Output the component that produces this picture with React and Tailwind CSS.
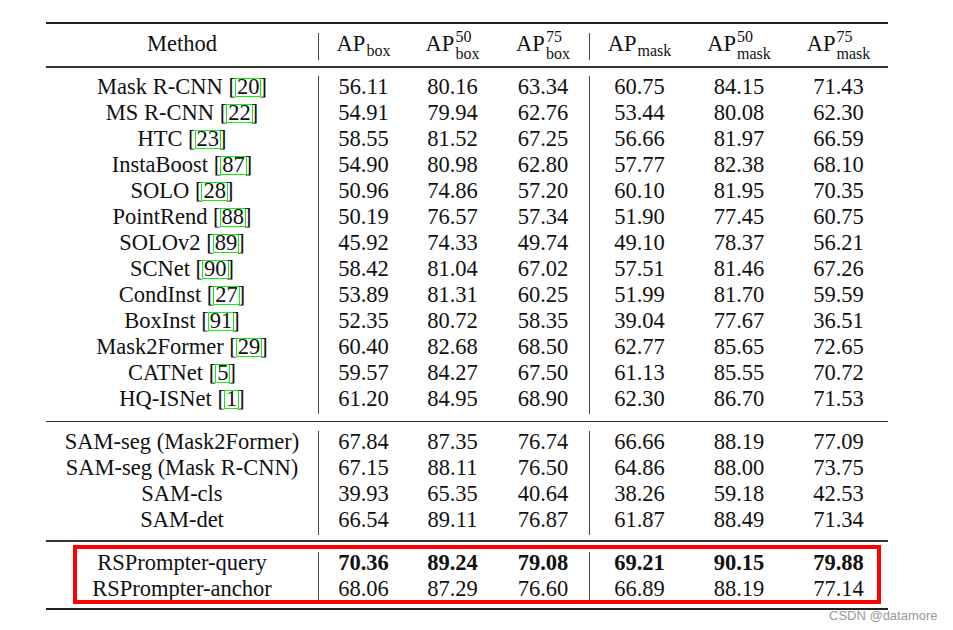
import React from 'react';

const grid = 'grid grid-cols-[272px_90px_89px_92px_100px_100px_99px]';

const baseline = [
    ['Mask R-CNN', '20', ['56.11', '80.16', '63.34', '60.75', '84.15', '71.43']],
    ['MS R-CNN', '22', ['54.91', '79.94', '62.76', '53.44', '80.08', '62.30']],
    ['HTC', '23', ['58.55', '81.52', '67.25', '56.66', '81.97', '66.59']],
    ['InstaBoost', '87', ['54.90', '80.98', '62.80', '57.77', '82.38', '68.10']],
    ['SOLO', '28', ['50.96', '74.86', '57.20', '60.10', '81.95', '70.35']],
    ['PointRend', '88', ['50.19', '76.57', '57.34', '51.90', '77.45', '60.75']],
    ['SOLOv2', '89', ['45.92', '74.33', '49.74', '49.10', '78.37', '56.21']],
    ['SCNet', '90', ['58.42', '81.04', '67.02', '57.51', '81.46', '67.26']],
    ['CondInst', '27', ['53.89', '81.31', '60.25', '51.99', '81.70', '59.59']],
    ['BoxInst', '91', ['52.35', '80.72', '58.35', '39.04', '77.67', '36.51']],
    ['Mask2Former', '29', ['60.40', '82.68', '68.50', '62.77', '85.65', '72.65']],
    ['CATNet', '5', ['59.57', '84.27', '67.50', '61.13', '85.55', '70.72']],
    ['HQ-ISNet', '1', ['61.20', '84.95', '68.90', '62.30', '86.70', '71.53']],
];

const samRows = [
    ['SAM-seg (Mask2Former)', ['67.84', '87.35', '76.74', '66.66', '88.19', '77.09']],
    ['SAM-seg (Mask R-CNN)', ['67.15', '88.11', '76.50', '64.86', '88.00', '73.75']],
    ['SAM-cls', ['39.93', '65.35', '40.64', '38.26', '59.18', '42.53']],
    ['SAM-det', ['66.54', '89.11', '76.87', '61.87', '88.49', '71.34']],
];

const ours = [
    ['RSPrompter-query', ['70.36', '89.24', '79.08', '69.21', '90.15', '79.88'], true],
    ['RSPrompter-anchor', ['68.06', '87.29', '76.60', '66.89', '88.19', '77.14'], false],
];

// value columns 0 and 3 carry the vertical rule on their left
const ruled = (i) => (i === 0 || i === 3 ? ' border-l border-[#4a4a4a]' : '');

const Row = ({ label, values, bold }) => (
    <div className={`${grid} grid-rows-[26px] h-[26px] leading-[21px]`}>
        <div className="text-center whitespace-pre">{label}</div>
        {values.map((v, i) => (
            <div key={i} className={'text-center' + ruled(i) + (bold ? ' font-bold' : '')}>
                {v}
            </div>
        ))}
    </div>
);

const Cite = ({ n }) => (
    <span>
        {' '}[<span className="inline-block border border-[#11ee11] leading-[16px] h-[19px] -ml-[1px] -mr-[2px] px-[1px] align-baseline">{n}</span>]
    </span>
);

const Head = ({ sub, sup }) => (
    <span className="whitespace-nowrap">
        AP
        {sup ? (
            <span className="relative -top-[9px] inline-flex flex-col h-[17px] ml-[1px] text-[16px] leading-[17px] text-left">
                <span>{sup}</span>
                <span>{sub}</span>
            </span>
        ) : (
            <span className="relative top-[5px] ml-[1px] text-[16px] leading-none">{sub}</span>
        )}
    </span>
);

const heads = [['box'], ['box', '50'], ['box', '75'], ['mask'], ['mask', '50'], ['mask', '75']];

const App = () => {
    return (
        <div className="relative w-[953px] h-[630px] bg-white text-[#111] text-[22.5px] font-['Liberation_Serif',serif]">
            <div className="pt-[22px] pl-[46px]">
                <div className="w-[842px]">
                    <div className="h-[2px] bg-[#222]" />

                    <div className="pt-[9px] pb-[6px]">
                        <div className={`${grid} h-[27px] leading-[22px]`}>
                            <div className="flex items-center justify-center pb-[5px]">Method</div>
                            {heads.map(([sub, sup], i) => (
                                <div key={i} className={'flex items-center justify-center pb-[5px]' + ruled(i)}>
                                    <Head sub={sub} sup={sup} />
                                </div>
                            ))}
                        </div>
                    </div>
                    <div className="h-[1.5px] bg-[#333]" />

                    <div className="pt-[8px] pb-[7px]">
                        {baseline.map(([name, ref, vals]) => (
                            <Row key={name} label={<>{name}<Cite n={ref} /></>} values={vals} />
                        ))}
                    </div>
                    <div className="h-[1.5px] bg-[#333]" />

                    <div className="pt-[9px] pb-[5px]">
                        {samRows.map(([name, vals]) => (
                            <Row key={name} label={name} values={vals} />
                        ))}
                    </div>
                    <div className="h-[1.5px] bg-[#333]" />

                    <div className="relative pt-[10px] pb-[4px]">
                        {ours.map(([name, vals, bold]) => (
                            <Row key={name} label={name} values={vals} bold={bold} />
                        ))}
                        <div className="absolute left-[27px] top-[3px] w-[808px] h-[59px] border-[4px] border-[#ff0000]" />
                    </div>
                    <div className="h-[2px] bg-[#222]" />
                </div>
            </div>

            <div className="absolute left-[829px] top-[606px] text-[13px] text-[#9a9a9a] font-['Liberation_Sans',sans-serif]">
                CSDN @datamore
            </div>
        </div>
    );
};

export default App;
